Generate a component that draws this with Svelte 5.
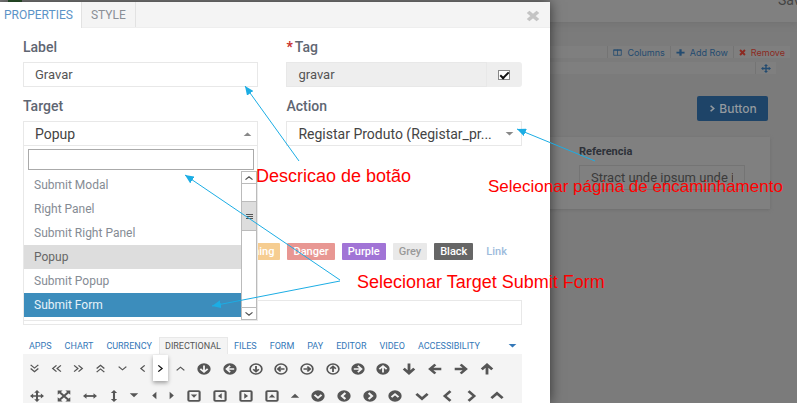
<script>
  const options = ['Submit Modal', 'Right Panel', 'Submit Right Panel', 'Popup', 'Submit Popup', 'Submit Form'];
  const navLinks = ['HOME', 'DESIGN', 'TEXT', 'SET', 'ROWS', 'ADD', 'FORM'];
  const colours = ['Warning', 'Danger', 'Purple', 'Grey', 'Black', 'Link'];
  const iconTabs = ['APPS', 'CHART', 'CURRENCY', 'DIRECTIONAL', 'FILES', 'FORM', 'PAY', 'EDITOR', 'VIDEO', 'ACCESSIBILITY'];

  // Every glyph points down; the second value turns it, the third is its cell width.
  const rows = [
    [
      ['double', 0, 22], ['double', 90, 22], ['double', 270, 22], ['double', 180, 22],
      ['angle', 0, 22], ['angle', 90, 18], ['angle', 270, 15], ['angle', 180, 22],
      ['solid', 0, 26], ['solid', 90, 26], ['ring', 0, 25], ['ring', 90, 26],
      ['ring', 270, 26], ['ring', 180, 25], ['solid', 270, 25], ['solid', 180, 26],
      ['arrow', 0, 26], ['arrow', 90, 26], ['arrow', 270, 25], ['arrow', 180, 27]
    ],
    [
      ['move', 0, 28], ['expand', 0, 26], ['span', 90, 26], ['span', 0, 21],
      ['caret', 0, 20], ['caret', 90, 19], ['caret', 270, 18], ['box', 0, 26],
      ['box', 90, 26], ['box', 270, 26], ['box', 180, 25], ['caret', 180, 21],
      ['disc', 0, 26], ['disc', 90, 26], ['disc', 270, 25], ['disc', 180, 26],
      ['chevron', 0, 27], ['chevron', 90, 25], ['chevron', 270, 22], ['chevron', 180, 29]
    ]
  ];

  let highlighted = $state('Submit Form');
  let activeIconTab = $state('DIRECTIONAL');
  let label = $state('Gravar');
  let tag = $state('gravar');
  let tagLinked = $state(true);
  let query = $state('');
  let iconClass = $state('');
</script>

{#snippet glyph(kind, turn)}
  <svg class="glyph {kind}" viewBox="0 0 20 20" preserveAspectRatio="none" aria-hidden="true">
    <g transform="rotate({turn} 10 10)" fill="none" stroke="currentColor">
      {#if kind === 'double'}
        <path d="M3 2l7 7 7-7M3 10l7 7 7-7" stroke-width="2.4" />
      {:else if kind === 'angle'}
        <path d="M3 6l7 7 7-7" stroke-width="2.4" />
      {:else if kind === 'solid'}
        <circle cx="10" cy="10" r="9.5" fill="currentColor" stroke="none" />
        <path d="M10 4v11M4.8 9.8L10 15l5.2-5.2" stroke="#f4f4f4" stroke-width="2.6" />
      {:else if kind === 'ring'}
        <circle cx="10" cy="10" r="8.4" stroke-width="2.4" />
        <path d="M10 5v9M6 10.500l4 4 4-4" stroke-width="2.6" />
      {:else if kind === 'arrow'}
        <path d="M10 1v16M2.500 9.500L10 17l7.500-7.500" stroke-width="4" />
      {:else if kind === 'move'}
        <path d="M10 3v14M3 10h14" stroke-width="2.8" />
        <path d="M10 0l4 4.500H6zM10 20l4-4.500H6zM0 10l4.500-4v8zM20 10l-4.500-4v8z" fill="currentColor" stroke="none" />
      {:else if kind === 'expand'}
        <path d="M4 4l12 12M16 4L4 16" stroke-width="3.4" />
        <path d="M1 1h7L1 8zM19 1v7l-7-7zM1 19v-7l7 7zM19 19h-7l7-7z" fill="currentColor" stroke="none" />
      {:else if kind === 'span'}
        <path d="M10 3v14" stroke-width="3" />
        <path d="M10 0l4.500 5h-9zM10 20l4.500-5h-9z" fill="currentColor" stroke="none" />
      {:else if kind === 'caret'}
        <path d="M3 6h14l-7 7z" fill="currentColor" stroke="none" />
      {:else if kind === 'box'}
        <rect x="2" y="2" width="16" height="16" rx="1.500" stroke-width="3" />
        <path d="M5.500 7.500h9L10 13z" fill="currentColor" stroke="none" />
      {:else if kind === 'disc'}
        <circle cx="10" cy="10" r="9.500" fill="currentColor" stroke="none" />
        <path d="M5 8l5 5 5-5" stroke="#f4f4f4" stroke-width="3" />
      {:else if kind === 'chevron'}
        <path d="M2 6.500l8 8 8-8" stroke-width="4" />
      {:else if kind === 'cross'}
        <path d="M3 3l14 14M17 3L3 17" stroke-width="5.500" />
      {:else if kind === 'plus'}
        <path d="M10 1v18M1 10h18" stroke-width="5" />
      {:else if kind === 'columns'}
        <path d="M1.500 2h17v16h-17zM10 2v16M1.500 4h17" stroke-width="2" />
      {/if}
    </g>
  </svg>
{/snippet}

<div class="app">
  <div class="page">
    <header>
      <nav>
        <span class="brand"></span>
        {#each navLinks as link}<a href="#top">{link}</a>{/each}
      </nav>
      <button class="save">Save</button>
    </header>
    <div class="canvas">
      <div class="tools">
        <button>{@render glyph('columns', 0)}Columns</button>
        <button>{@render glyph('plus', 0)}Add Row</button>
        <button class="remove">{@render glyph('cross', 0)}Remove</button>
      </div>
      <div class="tools drag">
        <button aria-label="Move">{@render glyph('move', 0)}</button>
      </div>
      <div class="actions"><button class="primary">{@render glyph('chevron', 270)}Button</button></div>
      <div class="card">
        <div class="reference">
          <label for="referencia">Referencia</label>
          <input id="referencia" value="Stract unde ipsum unde iste" />
        </div>
      </div>
    </div>
  </div>

  <section class="modal" role="dialog" aria-label="Properties">
    <div class="tabs">
      <button class="tab current">PROPERTIES</button>
      <button class="tab">STYLE</button>
      <button class="close" aria-label="Close">{@render glyph('cross', 0)}</button>
    </div>

    <div class="body">
      <div class="fields">
        <div class="field">
          <label for="label">Label</label>
          <input id="label" class="control" bind:value={label} />
        </div>
        <div class="field">
          <label for="tag"><b>*</b>Tag</label>
          <div class="group">
            <input id="tag" class="control" bind:value={tag} />
            <span class="addon"><input type="checkbox" aria-label="Custom tag" bind:checked={tagLinked} /></span>
          </div>
        </div>
        <div class="field">
          <label for="target">Target</label>
          <div class="combo">
            <button id="target" class="control large" aria-expanded="true">Popup {@render glyph('caret', 180)}</button>
            <div class="dropdown">
              <input class="search" aria-label="Search" bind:value={query} />
              <div class="results">
                <ul>
                  {#each options as option}
                    <li>
                      <button class:chosen={option === 'Popup'} class:highlighted={option === highlighted} onmouseenter={() => (highlighted = option)}>{option}</button>
                    </li>
                  {/each}
                </ul>
                <div class="scrollbar">
                  <span class="end">{@render glyph('angle', 180)}</span>
                  <span class="thumb"><i></i><i></i><i></i></span>
                  <span class="end last">{@render glyph('angle', 0)}</span>
                </div>
              </div>
            </div>
          </div>
        </div>
        <div class="field">
          <label for="action">Action</label>
          <div class="picker">
            <select id="action" class="control large"><option>Registar Produto (Registar_pr...</option></select>
            {@render glyph('caret', 0)}
          </div>
        </div>
      </div>

      <div class="colours">
        {#each colours as colour}<button class={colour.toLowerCase()}>{colour}</button>{/each}
      </div>
      <input class="control icon-class" aria-label="Icon" bind:value={iconClass} />

      <div class="icon-tabs">
        {#each iconTabs as tab}
          <button class:active={tab === activeIconTab} onclick={() => (activeIconTab = tab)}>{tab}</button>
        {/each}
        <button class="more" aria-label="More">{@render glyph('caret', 0)}</button>
      </div>
      <div class="icons">
        {#each rows as row, r}
          <div class="icon-row">
            {#each row as [kind, turn, width], i}
              <button class:picked={r === 0 && i === 6} style:width="{width}px" aria-label="{kind} {turn}">{@render glyph(kind, turn)}</button>
            {/each}
          </div>
        {/each}
      </div>
    </div>
  </section>

  <svg class="arrows" aria-hidden="true">
    <defs>
      <marker id="head" viewBox="0 0 9 8" refX="9" refY="4" markerWidth="9" markerHeight="8" markerUnits="userSpaceOnUse" orient="auto">
        <path d="M0 0l9 4-9 4z" fill="#1cade4" />
      </marker>
    </defs>
    <g stroke="#1cade4" marker-end="url(#head)">
      <path d="M299 161L245 86" />
      <path d="M595 161L517 129" />
      <path d="M340 280L185 175" />
      <path d="M340 281L212 306" />
    </g>
  </svg>
  <p class="note description">Descricao de botão</p>
  <p class="note routing">Selecionar página de encaminhamento</p>
  <p class="note submit">Selecionar Target Submit Form</p>
</div>

<style>
  :global(body) { margin: 0; }
  .app, .app * { box-sizing: border-box; }
  .app {
    position: relative;
    height: 100vh;
    overflow: hidden;
    background: #7b7b7b;
    font-family: Roboto, "Liberation Sans", sans-serif;
    color: #555;
  }
  button, input, select { font: inherit; color: inherit; border: 0; margin: 0; padding: 0; background: none; border-radius: 0; outline: 0; }
  ul { list-style: none; margin: 0; padding: 0; }
  .glyph { width: 14px; height: 12px; flex: none; display: block; }

  header {
    display: flex;
    justify-content: space-between;
    height: 22px;
    overflow: hidden;
    background: #808080;
    box-shadow: 0 3px 5px #747474;
  }
  nav { display: flex; gap: 28px; height: 2px; overflow: hidden; line-height: 12px; font-size: 11px; }
  nav a { color: #555; text-decoration: none; margin-top: -9px; }
  nav a:nth-of-type(2) { color: #2e6a2e; }
  .brand { width: 14px; height: 2px; margin: 0 -10px 0 8px; background: #2d5a2d; }
  .save { font-size: 14px; line-height: 16px; height: 16px; color: #444; margin: -8px -11px 0 0; }

  .canvas { padding: 24px 7px 0 0; }
  .tools { display: flex; justify-content: flex-end; height: 12px; background: #7f7f7f; font-family: Inter, Roboto, sans-serif; font-size: 9px; color: #234b70; }
  .tools button { display: flex; align-items: center; gap: 5px; padding: 0 5px; border-left: 1px solid #747474; }
  .tools .glyph { width: 9px; height: 7px; }
  .tools .remove { color: #8c2a22; }
  .tools .remove .glyph { width: 7px; }
  .tools.drag { margin: 4px 14px 0 0; }
  .tools.drag .glyph { width: 10px; height: 9px; }
  .actions { display: flex; justify-content: flex-end; padding: 22px 22px 0 0; }
  .primary { display: flex; align-items: center; justify-content: center; gap: 3px; width: 71px; height: 25px; border-radius: 2px; background: #1e4468; color: #949a9f; font: 500 12px Inter, Roboto, sans-serif; }
  .primary .glyph { width: 8px; height: 7px; }
  .card { display: flex; justify-content: flex-end; margin: 16px 20px 0 0; padding: 8px 25px 19px 0; background: #808080; box-shadow: 0 1px 3px #6e6e6e; }
  .reference { display: flex; flex-direction: column; width: 166px; gap: 6px; }
  .reference label { font-size: 11px; line-height: 14px; font-weight: 700; color: #2d3138; }
  .reference input { width: 100%; height: 25px; padding: 0 11px; border: 1px solid #747474; font-size: 13px; color: #3b3b3b; }

  .modal {
    position: absolute;
    left: 0;
    top: 2px;
    bottom: 0;
    width: 69%;
    overflow: hidden;
    background: #fff;
    box-shadow: 0 0 12px rgba(0, 0, 0, .6);
  }
  .tabs { display: flex; height: 26px; background: #f4f4f4; border-bottom: 1px solid #eee; }
  .tab { padding: 0 9px; font-size: 12px; line-height: 24px; color: #8a8f96; border-right: 1px solid #e2e2e2; }
  .tab.current { height: 26px; padding: 0 8px 0 4px; background: #fff; color: #5b93c7; }
  .close { margin: 2px 10px 0 auto; color: #c4c4c4; }

  .body { padding: 10px 28px 0 23px; }
  .fields { display: grid; grid-template-columns: 1fr 1fr; column-gap: 28px; row-gap: 10px; }
  .field label { display: block; height: 24px; font-size: 14px; line-height: 18px; font-weight: 500; color: #5f6672; }
  .field b { color: #c9302c; margin-right: 2px; font-weight: 700; }
  .control { display: block; width: 100%; height: 25px; padding: 0 11px; border: 1px solid #e8e8e8; background: #fff; font-size: 13px; }
  .control.large { font-size: 14px; color: #444; }
  .group { display: flex; background: #eee; border-radius: 3px; }
  .group .control { flex: 1; min-width: 0; background: #eee; }
  .addon { display: flex; align-items: center; justify-content: center; width: 35px; }
  .addon input { appearance: none; width: 12px; height: 10px; border: 1px solid #888; background: #fff; }
  .addon input:checked::before { content: ""; display: block; width: 7px; height: 3px; margin: 1px 0 0 1px; border: solid #111; border-width: 0 0 2px 2px; transform: rotate(-45deg); }
  .combo, .picker { position: relative; }
  .combo .large { display: flex; align-items: center; justify-content: space-between; padding-right: 4px; }
  .combo .large .glyph, .picker .glyph { width: 11px; height: 10px; color: #888; }
  .picker select { appearance: none; padding-right: 20px; }
  .picker .glyph { position: absolute; right: 7px; top: 8px; }

  .dropdown { position: absolute; z-index: 1; left: 0; right: 0; top: 24px; padding: 3px 0 0; background: #fff; border: 1px solid #e8e8e8; }
  .search { display: block; width: calc(100% - 7px); height: 21px; margin: 0 3px 1px 4px; padding: 0 4px; border: 1px solid #aaa; font-size: 12px; }
  .results { display: flex; height: 149px; }
  .results ul { flex: 1; padding-top: 2px; }
  .results li button { width: 100%; height: 24px; padding: 0 10px; text-align: left; font-size: 12px; color: #858b94; display: block; }
  .results .chosen { background: #ddd; color: #666; }
  .results .highlighted { background: #3c8dbc; color: #e6f2f9; }
  .scrollbar { display: flex; flex-direction: column; width: 16px; border: 1px solid #bbb; }
  .end { display: flex; align-items: center; justify-content: center; height: 12px; border-bottom: 1px solid #bbb; }
  .end.last { margin-top: auto; border: 0; border-top: 1px solid #bbb; }
  .end .glyph { width: 10px; height: 8px; }
  .thumb { display: flex; flex-direction: column; align-items: center; justify-content: center; gap: 1px; height: 30px; margin-top: 17px; background: #ddd; border: solid #bbb; border-width: 1px 0; }
  .thumb i { width: 7px; height: 1px; background: #555; }

  .colours { display: flex; justify-content: flex-end; gap: 7px; margin-top: 97px; }
  .colours button { height: 17px; padding: 0 6px; border-radius: 1px; color: #fff; font-size: 11px; font-weight: 500; line-height: 17px; }
  .warning { background: #f6cd91; }
  .danger { background: #e89793; }
  .purple { background: #a174d6; }
  .colours .grey { background: #e9e9e9; color: #999; }
  .black { background: #666; }
  .colours .link { color: #9dbbdc; padding: 0 15px 0 6px; }
  .icon-class { margin-top: 40px; }

  .icon-tabs { display: flex; height: 17px; margin-top: 12px; font-size: 9px; color: #3478b8; }
  .icon-tabs button { padding: 0 6px 0 5px; border: 1px solid transparent; border-bottom: 0; white-space: nowrap; }
  .icon-tabs .active { background: #f4f4f4; border-color: #e8e8e8; color: #555; }
  .icon-tabs .more { margin-left: auto; padding: 0 3px; }
  .icon-tabs .glyph { width: 11px; height: 10px; }
  .icons { background: #f4f4f4; padding-top: 1px; }
  .icon-row { display: flex; height: 27px; color: #555; }
  .icon-row button { display: flex; align-items: center; justify-content: center; flex: none; }
  .icon-row .picked { margin: 0 1px 1px 2px; background: #fff; color: #111; box-shadow: 0 2px 4px rgba(0, 0, 0, .35); }
  .icons .double, .icons .angle { width: 11px; height: 9px; }
  .icons .caret { width: 12px; height: 11px; }

  .arrows { position: absolute; z-index: 2; left: 0; top: 0; width: 100%; height: 100%; pointer-events: none; }
  .note { position: absolute; z-index: 3; margin: 0; white-space: nowrap; font: 18px/20px "Liberation Sans", Arial, sans-serif; color: #f00; }
  .description { left: 256px; top: 166px; }
  .routing { left: 488px; top: 177px; font-size: 17px; }
  .submit { left: 357px; top: 272px; }
</style>
